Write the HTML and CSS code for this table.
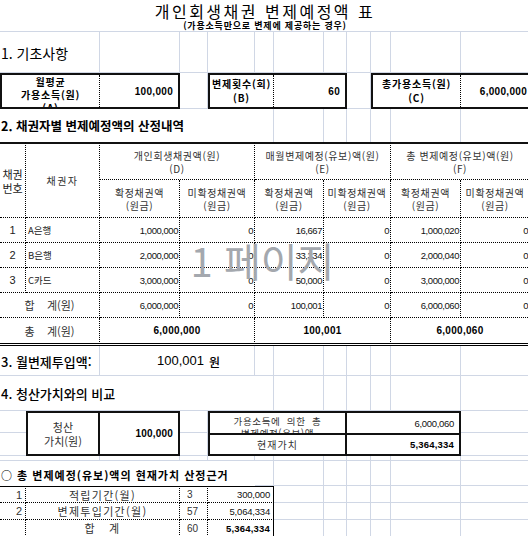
FILE: index.html
```html
<!DOCTYPE html>
<html lang="ko">
<head>
<meta charset="utf-8">
<title>개인회생채권 변제예정액 표</title>
<link rel="stylesheet" href="styles.css">
</head>
<body>
<div class="sheet">
  <div class="title">개인회생채권 변제예정액 표</div>
  <div class="subtitle">(가용소득만으로 변제에 제공하는 경우)</div>

  <div class="sec sec1">1. 기초사항</div>
  <div class="box box-a">
    <div class="bl bl-top"><span>월평균<br>가용소득(원)<br>(A)</span></div>
    <div class="bv">100,000</div>
  </div>
  <div class="box box-b">
    <div class="bl"><span>변제횟수(회)<br>(B)</span></div>
    <div class="bv">60</div>
  </div>
  <div class="box box-c">
    <div class="bl"><span>총가용소득(원)<br>(C)</span></div>
    <div class="bv bv-edge">6,000,000</div>
  </div>

  <div class="sec sec2">2. 채권자별 변제예정액의 산정내역</div>

  <div class="t th top r6x2 s1 th-no"><span>채권<br>번호</span></div>
  <div class="t th top r6x2 s1 th-cr"><span>채권자</span></div>
  <div class="t th top r6 s3"><span>개인회생채권액(원)<br>(D)</span></div>
  <div class="t th top r6 s5"><span>매월변제예정(유보)액(원)<br>(E)</span></div>
  <div class="t th top r6 s2"><span>총 변제예정(유보)액(원)<br>(F)</span></div>

  <div class="t th r7 s1"><span>확정채권액<br>(원금)</span></div>
  <div class="t th r7 s2"><span>미확정채권액<br>(원금)</span></div>
  <div class="t th r7 s2"><span>확정채권액<br>(원금)</span></div>
  <div class="t th r7 s3"><span>미확정채권액<br>(원금)</span></div>
  <div class="t th r7 s1"><span>확정채권액<br>(원금)</span></div>
  <div class="t th r7 s1"><span>미확정채권액<br>(원금)</span></div>

  <div class="t idx r8 s1">1</div>
  <div class="t name r8 s1">A은행</div>
  <div class="t n r8 s1">1,000,000</div>
  <div class="t n r8 s2">0</div>
  <div class="t n r8 s2">16,667</div>
  <div class="t n r8 s3">0</div>
  <div class="t n r8 s1">1,000,020</div>
  <div class="t n r8 s1">0</div>

  <div class="t idx r9 s1">2</div>
  <div class="t name r9 s1">B은행</div>
  <div class="t n r9 s1">2,000,000</div>
  <div class="t n r9 s2">0</div>
  <div class="t n r9 s2">33,334</div>
  <div class="t n r9 s3">0</div>
  <div class="t n r9 s1">2,000,040</div>
  <div class="t n r9 s1">0</div>

  <div class="t idx r10 s1">3</div>
  <div class="t name r10 s1">C카드</div>
  <div class="t n r10 s1">3,000,000</div>
  <div class="t n r10 s2">0</div>
  <div class="t n r10 s2">50,000</div>
  <div class="t n r10 s3">0</div>
  <div class="t n r10 s1">3,000,000</div>
  <div class="t n r10 s1">0</div>

  <div class="t lbl r11 s2">합&nbsp;&nbsp;&nbsp;&nbsp;계(원)</div>
  <div class="t n r11 s1">6,000,000</div>
  <div class="t n r11 s2">0</div>
  <div class="t n r11 s2">100,001</div>
  <div class="t n r11 s3">0</div>
  <div class="t n r11 s1">6,000,060</div>
  <div class="t n r11 s1">0</div>

  <div class="t lbl last r12 s2">총&nbsp;&nbsp;&nbsp;&nbsp;계(원)</div>
  <div class="t tot last r12 s3">6,000,000</div>
  <div class="t tot last r12 s5">100,001</div>
  <div class="t tot last r12 s2">6,000,060</div>

  <div class="sec sec3">3. 월변제투입액:</div>
  <div class="sec3-amt gb">100,001</div>
  <div class="sec3-unit">원</div>

  <div class="sec sec4 gb">4. 청산가치와의 비교</div>
  <div class="sec4-fill gb"></div>

  <div class="liq">
    <div class="liq-l"><span>청산<br>가치(원)</span></div>
    <div class="liq-v">100,000</div>
  </div>

  <div class="pv">
    <div class="pv-l pv-top"><span>가용소득에&nbsp;&nbsp;의한&nbsp;&nbsp;총<br>변제예정(유보)액</span></div>
    <div class="pv-v pv-top">6,000,060</div>
    <div class="pv-l"><span>현재가치</span></div>
    <div class="pv-v pv-b">5,364,334</div>
  </div>

  <div class="sec sec5">○ 총 변제예정(유보)액의 현재가치 산정근거</div>

  <div class="sm sm-n first r19">1</div>
  <div class="sm sm-l first r19">적립기간(월)</div>
  <div class="sm sm-c first r19">3</div>
  <div class="sm sm-v first r19">300,000</div>

  <div class="sm sm-n r20">2</div>
  <div class="sm sm-l r20">변제투입기간(월)</div>
  <div class="sm sm-c r20">57</div>
  <div class="sm sm-v r20">5,064,334</div>

  <div class="sm sm-n r21"></div>
  <div class="sm sm-l r21">합&nbsp;&nbsp;&nbsp;계</div>
  <div class="sm sm-c r21">60</div>
  <div class="sm sm-v sm-b r21">5,364,334</div>

  <div class="watermark">1 페이지</div>
</div>
</body>
</html>
```

FILE: styles.css
```css
* {
  box-sizing: border-box;
  margin: 0;
  padding: 0;
}

html, body {
  background: #fff;
}

body {
  width: 528px;
  height: 536px;
  overflow: hidden;
  font-family: "Noto Sans CJK KR", "Liberation Sans", sans-serif;
  color: #000;
}

.sheet {
  --gl: linear-gradient(#d0d7e5, #d0d7e5);
  position: relative;
  display: grid;
  width: 530px;
  grid-template-columns: 26px 74px 80px 28px 47px 19px 50px 23px 24px 20px 70px 69px;
  grid-template-rows: 19px 13px 41px 36px 33px 38px 38px 25px 25px 25px 25px 28px 30px 35px 22px 23px 5px 25px 17px 17px 17px;
  background-color: #fff;
  background-repeat: no-repeat;
  background-image:
    var(--gl), var(--gl), var(--gl), var(--gl), var(--gl),
    var(--gl), var(--gl), var(--gl), var(--gl), var(--gl),
    var(--gl), var(--gl), var(--gl), var(--gl), var(--gl),
    var(--gl), var(--gl), var(--gl), var(--gl), var(--gl),
    var(--gl);
  background-size:
    1px 510px, 1px 510px, 1px 510px, 1px 510px, 1px 510px,
    1px 510px, 1px 510px, 1px 510px, 1px 510px, 1px 510px,
    100% 1px, 100% 1px, 100% 1px, 100% 1px, 100% 1px,
    100% 1px, 100% 1px, 100% 1px, 100% 1px, 100% 1px,
    100% 1px;
  background-position:
    99px 32px, 179px 32px, 207px 32px, 254px 32px, 273px 32px,
    323px 32px, 346px 32px, 370px 32px, 390px 32px, 460px 32px,
    0 31px, 0 72px, 0 108px, 0 375px, 0 410px,
    0 432px, 0 455px, 0 460px, 0 485px, 0 502px,
    0 519px;
}

/* ---------- title ---------- */
.title {
  grid-column: 1 / -1;
  grid-row: 1;
  text-align: center;
  font-size: 16px;
  line-height: 19px;
  padding-top: 2px;
  letter-spacing: 2.5px;
  white-space: nowrap;
}

.subtitle {
  grid-column: 1 / -1;
  grid-row: 2;
  text-align: center;
  font-size: 9px;
  line-height: 13px;
  font-weight: bold;
  letter-spacing: 0.8px;
  white-space: nowrap;
}

/* ---------- section headings ---------- */
.sec {
  display: flex;
  align-items: center;
  padding-left: 1px;
  white-space: nowrap;
  font-size: 13px;
  font-weight: 500;
}

.sec1 {
  grid-column: 1 / 3;
  grid-row: 3;
  font-size: 14px;
  font-weight: 400;
}

.sec2 {
  grid-column: 1 / 6;
  grid-row: 5;
  background: #fff;
  font-size: 12.5px;
  font-weight: bold;
}

.sec3 {
  grid-column: 1 / 3;
  grid-row: 13;
}

.sec3-amt {
  grid-column: 3 / 5;
  grid-row: 13;
  background: #fff;
  display: flex;
  align-items: center;
  justify-content: flex-end;
  padding-right: 4px;
  font-family: "Liberation Sans", sans-serif;
  font-size: 13px;
}

.sec3-unit {
  grid-column: 5 / 6;
  grid-row: 13;
  display: flex;
  align-items: center;
  padding-left: 1px;
  font-size: 12px;
  font-weight: 500;
}

.sec4 {
  grid-column: 1 / 4;
  grid-row: 14;
  background: #fff;
}

.sec4-fill {
  grid-column: 4 / 6;
  grid-row: 14;
  background: #fff;
}

.gb {
  border-bottom: 1px solid #d0d7e5;
}

.sec5 {
  grid-column: 1 / 6;
  grid-row: 18;
  background: #fff;
  font-size: 11px;
  font-weight: bold;
  letter-spacing: 1px;
  padding-top: 3px;
}

/* ---------- section 1 boxes ---------- */
.box {
  grid-row: 4;
  display: grid;
  border: 2px solid #111;
  background: #fff;
}

.box-a {
  grid-column: 1 / 4;
  grid-template-columns: 98px 1fr;
}

.box-b {
  grid-column: 5 / 9;
  grid-template-columns: 64px 1fr;
}

.box-c {
  grid-column: 10 / 13;
  grid-template-columns: 88px 1fr;
}

.bl {
  display: flex;
  align-items: center;
  justify-content: center;
  text-align: center;
  border-right: 1px dotted #000;
  font-size: 10px;
  font-weight: bold;
  line-height: 14px;
  letter-spacing: 0.8px;
  white-space: nowrap;
  overflow: hidden;
}

.bl-top {
  align-items: flex-start;
  line-height: 13px;
}

.bv {
  display: flex;
  align-items: center;
  justify-content: flex-end;
  padding-right: 5px;
  font-family: "Liberation Sans", sans-serif;
  font-weight: bold;
  font-size: 10px;
  letter-spacing: 0.3px;
}

.bv-edge {
  padding-right: 1px;
}

/* ---------- section 2 table ---------- */
.t {
  background: #fff;
  border-right: 1px dotted #000;
  border-bottom: 1px dotted #000;
  display: flex;
  align-items: center;
  overflow: hidden;
  white-space: nowrap;
}

.top {
  border-top: 2px solid #111;
}

.last {
  border-bottom: 3px double #000;
}

.r6x2 { grid-row: 6 / span 2; }
.r6 { grid-row: 6; }
.r7 { grid-row: 7; }
.r8 { grid-row: 8; }
.r9 { grid-row: 9; }
.r10 { grid-row: 10; }
.r11 { grid-row: 11; }
.r12 { grid-row: 12; }
.r19 { grid-row: 19; }
.r20 { grid-row: 20; }
.r21 { grid-row: 21; }

.s1 { grid-column-end: span 1; }
.s2 { grid-column-end: span 2; }
.s3 { grid-column-end: span 3; }
.s5 { grid-column-end: span 5; }

.th {
  justify-content: center;
  text-align: center;
  font-size: 10px;
  line-height: 13px;
  letter-spacing: 0.6px;
  color: #333;
}

.th-no {
  font-size: 11px;
  line-height: 14px;
  letter-spacing: 0;
  color: #222;
}

.th-cr {
  letter-spacing: 1.5px;
}

.idx {
  justify-content: center;
  font-family: "Liberation Sans", sans-serif;
  font-size: 11px;
  color: #222;
}

.name {
  padding-left: 2px;
  font-size: 9.5px;
  color: #222;
}

.n {
  justify-content: flex-end;
  padding-right: 1px;
  font-family: "Liberation Sans", sans-serif;
  font-size: 9.5px;
  letter-spacing: -0.45px;
  color: #111;
}

.lbl {
  justify-content: center;
  font-size: 11px;
  color: #333;
}

.tot {
  justify-content: center;
  font-family: "Liberation Sans", sans-serif;
  font-weight: bold;
  font-size: 10px;
  letter-spacing: 0.3px;
}

/* ---------- section 4 boxes ---------- */
.liq {
  grid-column: 2 / 4;
  grid-row: 15 / 17;
  display: grid;
  grid-template-columns: 72px 1fr;
  border: 2px solid #111;
  background: #fff;
}

.liq-l {
  display: flex;
  align-items: center;
  justify-content: center;
  text-align: center;
  border-right: 2px solid #111;
  font-size: 11px;
  line-height: 14px;
  color: #333;
}

.liq-v {
  display: flex;
  align-items: center;
  justify-content: flex-end;
  padding-right: 5px;
  font-family: "Liberation Sans", sans-serif;
  font-weight: bold;
  font-size: 10px;
  letter-spacing: 0.2px;
}

.pv {
  grid-column: 5 / 12;
  grid-row: 15 / 17;
  display: grid;
  grid-template-columns: 137px 1fr;
  grid-template-rows: 22px 1fr;
  border: 2px solid #111;
  background: #fff;
}

.pv-l {
  display: flex;
  align-items: center;
  justify-content: center;
  text-align: center;
  border-right: 2px solid #111;
  font-size: 10px;
  line-height: 12px;
  letter-spacing: 1px;
  color: #333;
  overflow: hidden;
  white-space: nowrap;
}

.pv-top {
  border-bottom: 2px solid #111;
}

.pv-l.pv-top {
  align-items: flex-start;
  padding-top: 2px;
  font-size: 9.5px;
  letter-spacing: 0.6px;
}

.pv-v {
  display: flex;
  align-items: center;
  justify-content: flex-end;
  padding-right: 5px;
  font-family: "Liberation Sans", sans-serif;
  font-size: 9.5px;
  letter-spacing: -0.3px;
  color: #111;
}

.pv-b {
  font-weight: bold;
  font-size: 9.5px;
  letter-spacing: 0.2px;
  color: #000;
}

/* ---------- small table ---------- */
.sm {
  background: #fff;
  display: flex;
  align-items: center;
  border-right: 1px dotted #000;
  border-bottom: 1px dotted #000;
  font-size: 11px;
  color: #333;
  white-space: nowrap;
  overflow: hidden;
}

.first {
  border-top: 1px solid #000;
}

.sm-n {
  grid-column: 1 / 2;
  justify-content: flex-end;
  padding-right: 3px;
  font-family: "Liberation Sans", sans-serif;
}

.sm-l {
  grid-column: 2 / 4;
  justify-content: center;
  letter-spacing: 1.3px;
}

.sm-c {
  grid-column: 4 / 5;
  padding-left: 7px;
  font-family: "Liberation Sans", sans-serif;
  font-size: 10px;
}

.sm-v {
  grid-column: 5 / 7;
  justify-content: flex-end;
  padding-right: 3px;
  border-right: 1px solid #000;
  font-family: "Liberation Sans", sans-serif;
  font-size: 9.5px;
  letter-spacing: -0.2px;
  color: #111;
}

.sm-b {
  font-weight: bold;
  font-size: 9.5px;
  letter-spacing: 0.2px;
  color: #000;
}

/* ---------- page watermark ---------- */
.watermark {
  position: absolute;
  top: 240px;
  left: 0;
  width: 528px;
  padding-right: 3px;
  text-align: center;
  font-family: "Noto Sans CJK KR", sans-serif;
  font-size: 40px;
  line-height: 40px;
  font-weight: 400;
  color: #a4a8ae;
  white-space: nowrap;
  pointer-events: none;
}
```
